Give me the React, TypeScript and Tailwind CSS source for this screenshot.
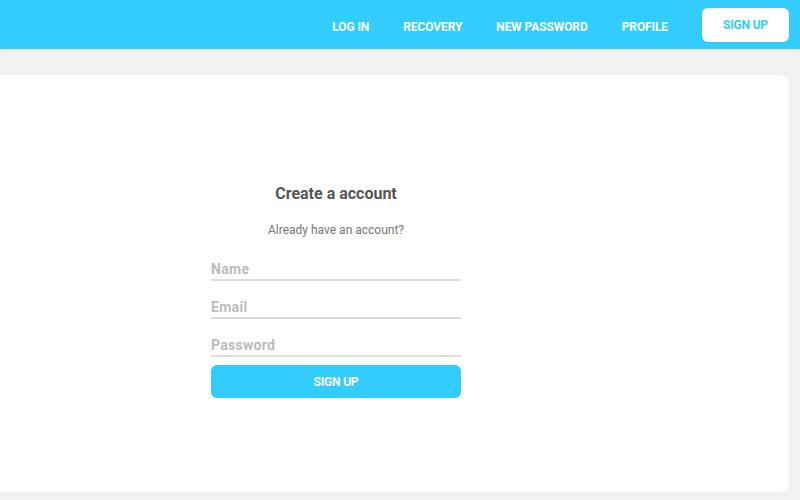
import React from "react";

const links = ["LOG IN", "RECOVERY", "NEW PASSWORD", "PROFILE"];

export default function App() {
  return (
    <div
      className="h-[500px] w-full overflow-hidden bg-[#f2f2f2]"
      style={{ fontFamily: "Roboto, 'Liberation Sans', sans-serif" }}
    >
      <header className="flex h-[49px] items-center justify-end bg-[#33ccff] pr-[11px] shadow-[0_1px_3px_rgba(0,0,0,0.06)]">
        <nav className="flex items-center gap-[34px]">
          {links.map((l) => (
            <a
              key={l}
              href="#"
              className="pt-[4px] text-[12px] font-bold tracking-[-0.1px] text-white"
            >
              {l}
            </a>
          ))}
          <a
            href="#"
            className="flex h-[34px] w-[87px] items-center justify-center rounded-[6px] bg-white pt-[1px] text-[12px] font-bold tracking-[-0.2px] text-[#33ccff]"
          >
            SIGN UP
          </a>
        </nav>
      </header>

      <div className="flex">
        <main className="-ml-[117px] mt-[26px] flex h-[417px] w-[906px] shrink-0 flex-col items-center rounded-[8px] bg-white pt-[107px] shadow-[0_0_2px_rgba(0,0,0,0.04)]">
          <h1 className="text-[16px] font-bold leading-6 text-[#555]">
            Create a account
          </h1>
          <p className="mt-[16px] text-[12px] leading-4 text-[#777]">
            Already have an account?
          </p>
          <form className="mt-[22px] flex w-[250px] flex-col">
            {["Name", "Email", "Password"].map((p, i) => (
              <input
                key={p}
                placeholder={p}
                type={p === "Password" ? "password" : "text"}
                className={`h-[21px] border-b-2 border-[#dddddd] bg-transparent text-[14px] font-bold tracking-[0.3px] text-[#555] outline-none placeholder:text-[#bbbbbb] ${
                  i > 0 ? "mt-[17px]" : ""
                }`}
              />
            ))}
            <button
              type="button"
              className="mt-[8px] h-[33px] rounded-[6px] bg-[#33ccff] text-[12px] font-bold tracking-[-0.2px] text-white"
            >
              SIGN UP
            </button>
          </form>
        </main>
      </div>
    </div>
  );
}
